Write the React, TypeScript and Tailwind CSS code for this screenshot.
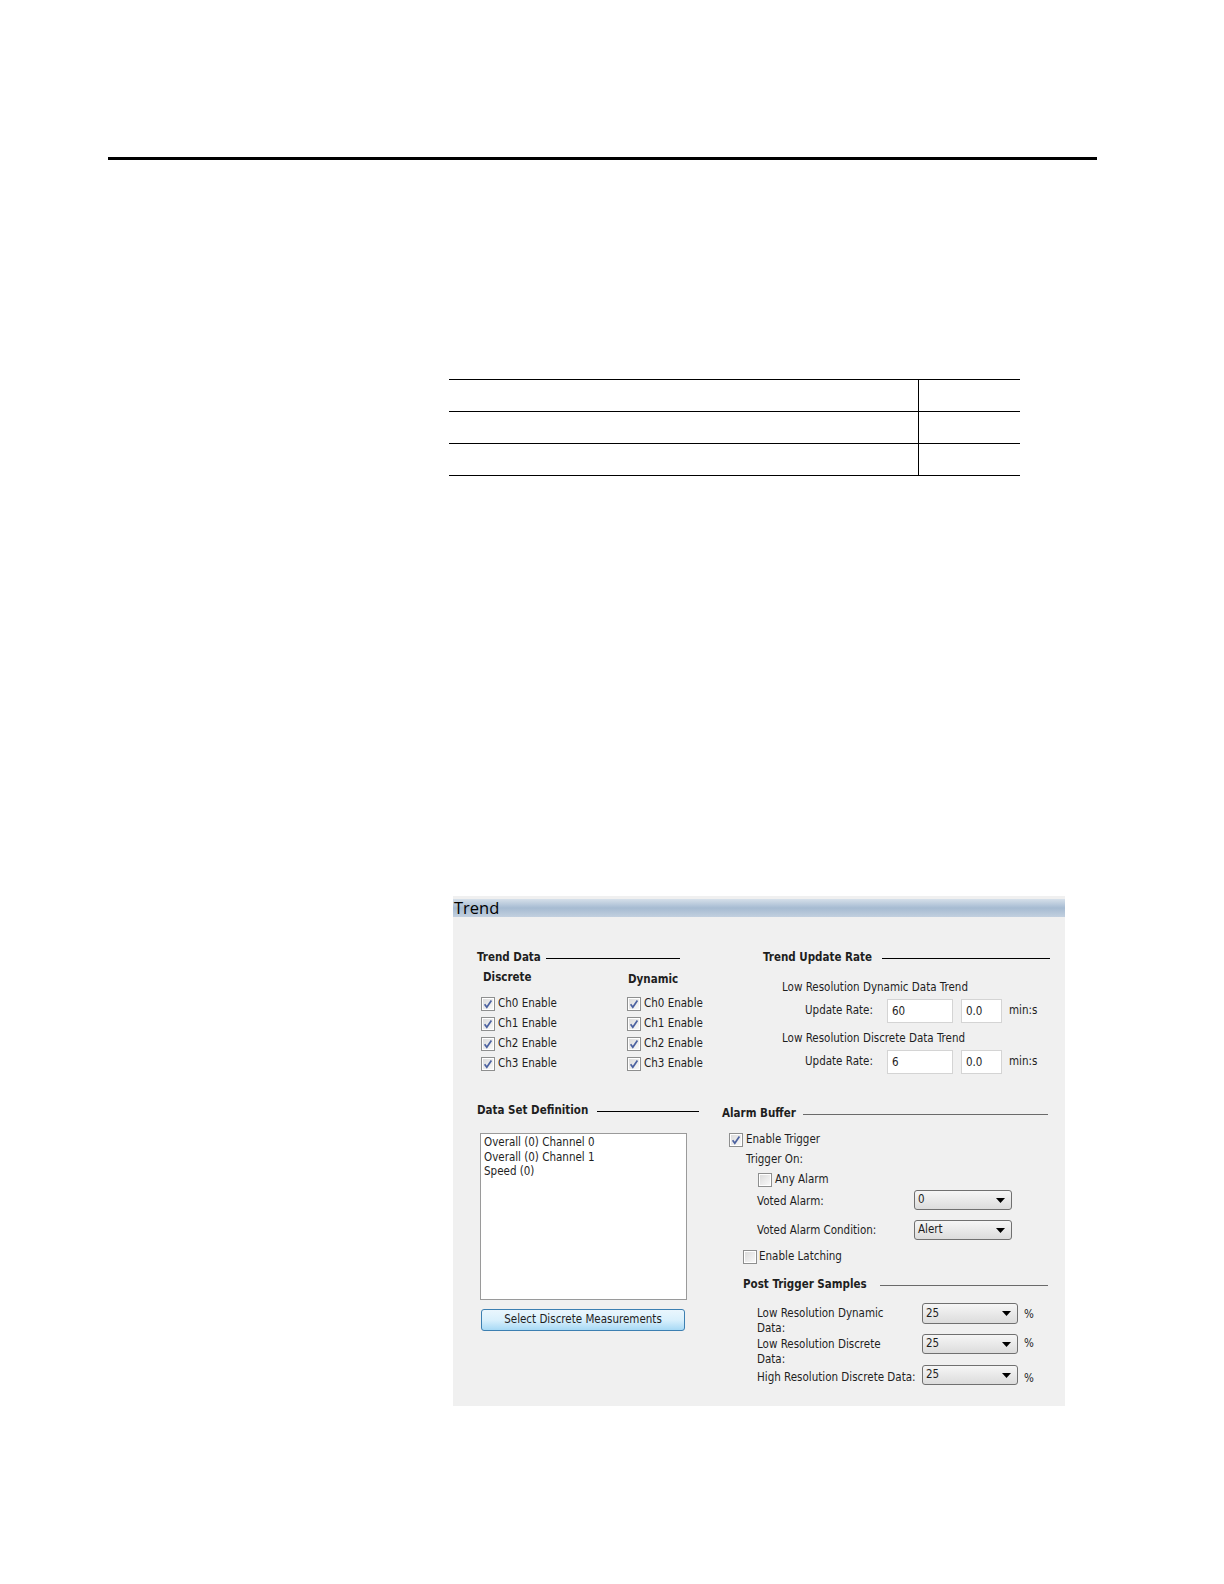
import React from "react";

const ui = { fontFamily: '"DejaVu Sans Condensed", "DejaVu Sans", sans-serif' };

function Check({ on }: { on?: boolean }) {
  return (
    <svg width="14" height="14" viewBox="0 0 14 14" className="shrink-0">
      <defs>
        <linearGradient id="cbg" x1="0" y1="0" x2="1" y2="1">
          <stop offset="0" stopColor="#dcdcdc" />
          <stop offset="1" stopColor="#f8f8f8" />
        </linearGradient>
      </defs>
      <rect x="0.5" y="0.5" width="13" height="13" fill="#ffffff" stroke="#8e8f8f" />
      <rect x="2" y="2" width="10" height="10" fill="url(#cbg)" />
      {on && <path d="M3.6 7.2 L5.8 10.2 L10.4 3.4" fill="none" stroke="#4c62a0" strokeWidth="1.7" />}
    </svg>
  );
}

function CheckRow({ label, on = true }: { label: string; on?: boolean }) {
  return (
    <div className="flex h-[20px] items-center gap-[3px] whitespace-nowrap">
      <Check on={on} />
      <span>{label}</span>
    </div>
  );
}

function Heading({ text, gap, line = "bg-black" }: { text: string; gap: string; line?: string }) {
  return (
    <div className={`flex h-[16px] items-center ${gap}`}>
      <span className="font-bold whitespace-nowrap">{text}</span>
      <div className={`h-px flex-1 ${line}`} />
    </div>
  );
}

function Box({ value, w }: { value: string; w: string }) {
  return (
    <div className={`flex h-[24px] ${w} items-start border border-[#d4d4d4] bg-white pl-[4px] pt-[3px]`}>
      {value}
    </div>
  );
}

function Select({ value, w, h = "h-[20px]" }: { value: string; w: string; h?: string }) {
  return (
    <div
      className={`flex ${h} ${w} shrink-0 items-center justify-between rounded-[3px] border border-[#707070] bg-gradient-to-b from-[#f6f6f6] to-[#dcdcdc] pl-[3px] pr-[6px]`}
    >
      <span>{value}</span>
      <svg width="9" height="5" viewBox="0 0 9 5">
        <path d="M0 0 H9 L4.5 5 Z" fill="#000" />
      </svg>
    </div>
  );
}

export default function App() {
  return (
    <div className="min-h-[1584px] w-[1224px] bg-white pt-[157px]">
      <div className="ml-[108px] h-[3px] w-[989px] bg-black" />

      <div className="ml-[449px] mt-[219px] w-[571px] border-t border-black">
        {[0, 1, 2].map((i) => (
          <div key={i} className="flex h-[32px] border-b border-black">
            <div className="w-[470px] border-r border-black" />
            <div className="flex-1" />
          </div>
        ))}
      </div>

      <div className="ml-[453px] mt-[420px] h-[510px] w-[612px] bg-[#f0f0f0] pt-[3px] text-[11.5px] text-[#1e1e1e]" style={ui}>
        <div className="flex h-[18px] items-center bg-gradient-to-b from-[#d6e0ea] via-[#a6bbd2] to-[#c2d0df] pl-[1px]">
          <span className="text-[16.5px] leading-none text-black" style={{ fontFamily: '"Open Sans", sans-serif' }}>
            Trend
          </span>
        </div>

        <div className="flex pl-[24px] pt-[33px]">
          <div className="w-[203px] shrink-0">
            <Heading text="Trend Data" gap="gap-[5px]" />
            <div className="ml-[4px] mt-[4px] flex">
              <div className="w-[146px] shrink-0">
                <div className="flex h-[16px] items-center pl-[2px] font-bold">Discrete</div>
                <div className="mt-[8px]">
                  <CheckRow label="Ch0 Enable" />
                  <CheckRow label="Ch1 Enable" />
                  <CheckRow label="Ch2 Enable" />
                  <CheckRow label="Ch3 Enable" />
                </div>
              </div>
              <div className="shrink-0">
                <div className="flex h-[16px] items-center pl-[1px] pt-[3px] font-bold">Dynamic</div>
                <div className="mt-[8px]">
                  <CheckRow label="Ch0 Enable" />
                  <CheckRow label="Ch1 Enable" />
                  <CheckRow label="Ch2 Enable" />
                  <CheckRow label="Ch3 Enable" />
                </div>
              </div>
            </div>
          </div>

          <div className="ml-[83px] w-[287px] shrink-0">
            <Heading text="Trend Update Rate" gap="gap-[10px]" />
            <div className="ml-[19px] mt-[14px] flex h-[16px] items-center whitespace-nowrap">Low Resolution Dynamic Data Trend</div>
            <div className="ml-[42px] mt-[3px] flex items-center">
              <span className="w-[82px] shrink-0">Update Rate:</span>
              <Box value="60" w="w-[66px]" />
              <div className="ml-[8px]">
                <Box value="0.0" w="w-[41px]" />
              </div>
              <span className="ml-[7px]">min:s</span>
            </div>
            <div className="ml-[19px] mt-[8px] flex h-[16px] items-center whitespace-nowrap">Low Resolution Discrete Data Trend</div>
            <div className="ml-[42px] mt-[3px] flex items-center">
              <span className="w-[82px] shrink-0">Update Rate:</span>
              <Box value="6" w="w-[66px]" />
              <div className="ml-[8px]">
                <Box value="0.0" w="w-[41px]" />
              </div>
              <span className="ml-[7px]">min:s</span>
            </div>
          </div>
        </div>

        <div className="mt-[29px] flex items-start pl-[24px]">
          <div className="w-[222px] shrink-0">
            <Heading text="Data Set Definition" gap="gap-[9px]" />
            <div className="ml-[3px] mt-[14px] h-[167px] w-[207px] border border-[#9a9a9a] bg-white px-[3px] pt-[1px] leading-[14.5px]">
              <div>Overall (0) Channel 0</div>
              <div>Overall (0) Channel 1</div>
              <div>Speed (0)</div>
            </div>
            <div className="ml-[4px] mt-[9px] flex h-[22px] w-[204px] items-center justify-center rounded-[3px] border border-[#3c7fb1] bg-gradient-to-b from-[#eaf6fd] via-[#d9f0fc] to-[#a7d9f5]">
              Select Discrete Measurements
            </div>
          </div>

          <div className="ml-[23px] w-[326px] shrink-0 pt-[3px]">
            <Heading text="Alarm Buffer" gap="gap-[7px]" line="bg-[#6a6a6a]" />
            <div className="ml-[7px] mt-[8px]">
              <CheckRow label="Enable Trigger" on />
            </div>
            <div className="ml-[24px] flex h-[20px] items-center">Trigger On:</div>
            <div className="ml-[36px]">
              <CheckRow label="Any Alarm" on={false} />
            </div>
            <div className="flex items-start">
              <span className="ml-[35px] w-[157px] shrink-0 pt-[4px] leading-[14px]">Voted Alarm:</span>
              <Select value="0" w="w-[98px]" />
            </div>
            <div className="mt-[10px] flex items-start">
              <span className="ml-[35px] w-[157px] shrink-0 pt-[3px] leading-[14px]">Voted Alarm Condition:</span>
              <Select value="Alert" w="w-[98px]" />
            </div>
            <div className="ml-[21px] mt-[7px] flex h-[20px] items-center gap-[2px]">
              <Check />
              <span>Enable Latching</span>
            </div>
            <div className="ml-[21px] mt-[10px]">
              <Heading text="Post Trigger Samples" gap="gap-[13px]" line="bg-[#6a6a6a]" />
            </div>
            <div className="mt-[10px] flex h-[31px] items-start">
              <span className="ml-[35px] w-[165px] shrink-0 pt-[3px] leading-[15px]">
                Low Resolution Dynamic
                <br />
                Data:
              </span>
              <Select value="25" w="w-[96px]" h="h-[21px]" />
              <span className="ml-[6px] pt-[3px]">%</span>
            </div>
            <div className="flex h-[31px] items-start">
              <span className="ml-[35px] w-[165px] shrink-0 pt-[3px] leading-[15px]">
                Low Resolution Discrete
                <br />
                Data:
              </span>
              <Select value="25" w="w-[96px]" />
              <span className="ml-[6px] pt-[1px]">%</span>
            </div>
            <div className="flex h-[24px] items-start">
              <span className="ml-[35px] w-[165px] shrink-0 pt-[5px] leading-[14px] whitespace-nowrap">High Resolution Discrete Data:</span>
              <Select value="25" w="w-[96px]" />
              <span className="ml-[6px] pt-[5px]">%</span>
            </div>
          </div>
        </div>
      </div>
    </div>
  );
}
